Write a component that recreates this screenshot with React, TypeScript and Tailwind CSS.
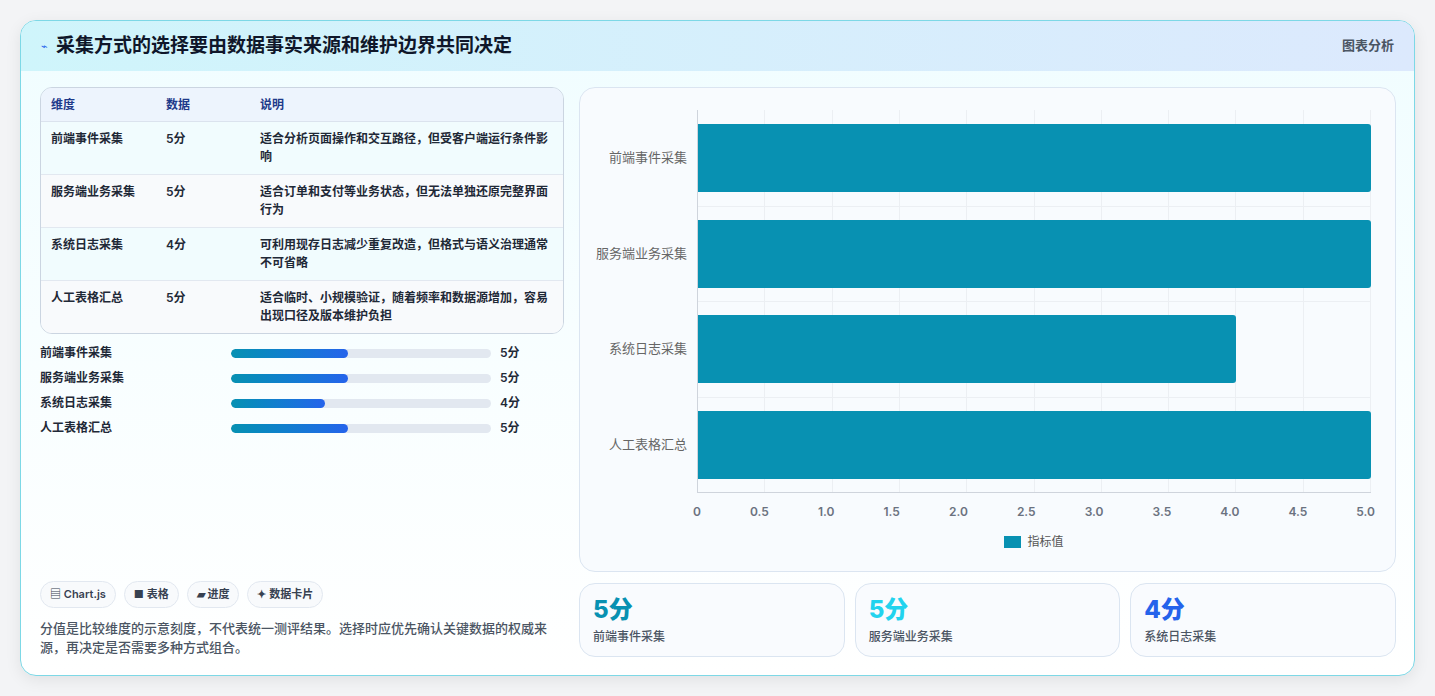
const rows = [
  { name: "前端事件采集", v: 5, desc: "适合分析页面操作和交互路径，但受客户端运行条件影响" },
  { name: "服务端业务采集", v: 5, desc: "适合订单和支付等业务状态，但无法单独还原完整界面行为" },
  { name: "系统日志采集", v: 4, desc: "可利用现存日志减少重复改造，但格式与语义治理通常不可省略" },
  { name: "人工表格汇总", v: 5, desc: "适合临时、小规模验证，随着频率和数据源增加，容易出现口径及版本维护负担" },
];

const ticks = ["0", "0.5", "1.0", "1.5", "2.0", "2.5", "3.0", "3.5", "4.0", "4.5", "5.0"];

function Chart() {
  return (
    <div className="flex-1 rounded-2xl border border-[#dbe5f1] bg-[#f8fbfe] pt-[22px] pb-[20px] pr-[24px] flex flex-col">
      <div className="flex">
        <div className="w-[117px] flex flex-col text-[13px] text-[#666]">
          {rows.map((r) => (
            <div key={r.name} className="h-[95.5px] flex items-center justify-end pr-[10px]">{r.name}</div>
          ))}
        </div>
        <div className="flex-1 relative border-l border-b border-[#cfd4dc]">
          <div className="absolute inset-0 grid grid-cols-10">
            {ticks.slice(1).map((t) => (
              <div key={t} className="border-r border-[#eceff3]" />
            ))}
          </div>
          <div className="relative flex flex-col">
            {rows.map((r, i) => (
              <div key={r.name} className={"h-[95.5px] flex items-center" + (i > 0 ? " border-t border-[#eceff3]" : "")}>
                <div className="h-[68px] bg-[#0891b2] rounded-r-[3px]" style={{ width: `${(r.v / 5) * 100}%` }} />
              </div>
            ))}
          </div>
        </div>
      </div>
      <div className="flex pl-[117px] mt-[10px]">
        <div className="flex-1 flex justify-between text-[12px] font-semibold text-[#6b7280] -mx-[4px]">
          {ticks.map((t) => (
            <span key={t}>{t}</span>
          ))}
        </div>
      </div>
      <div className="flex justify-center items-center gap-[6px] mt-[12px] pl-[117px] text-[12px] text-[#555]">
        <span className="w-[17px] h-[12px] bg-[#0891b2]" />
        指标值
      </div>
    </div>
  );
}

export default function App() {
  return (
    <div className="w-[1435px] h-[696px] bg-[#f3f4f6] pt-[20px] px-[20px]" style={{ fontFamily: "Inter, 'Noto Sans CJK SC', sans-serif" }}>
      <div className="h-[656px] rounded-2xl border border-[#7dd8e6] bg-gradient-to-b from-[#f0fdff] to-white overflow-hidden flex flex-col shadow-[0_4px_16px_rgba(0,0,0,0.08)]">
        <div className="h-[56px] bg-gradient-to-r from-[#cff5fb] to-[#dce9fd] flex items-center justify-between px-[20px]">
          <div className="flex items-center gap-[8px]">
            <span className="text-[11px] text-[#2563eb]">⌁</span>
            <span className="text-[19px] font-bold text-[#0f172a]">采集方式的选择要由数据事实来源和维护边界共同决定</span>
          </div>
          <span className="text-[13px] font-semibold text-[#4b5563]">图表分析</span>
        </div>
        <div className="flex-1 flex gap-[15px] pt-[16px] pb-[18px] pl-[19px] pr-[18px]">
          <div className="w-[524px] flex flex-col">
            <div className="rounded-xl border border-[#cbd5e1] overflow-hidden">
              <div className="flex h-[34px] items-center bg-[#edf4fd] text-[12px] font-semibold text-[#1e3a8a] border-b border-[#dbe3ee]">
                <div className="w-[125px] pl-[10px]">维度</div>
                <div className="w-[94px]">数据</div>
                <div>说明</div>
              </div>
              {rows.map((r, i) => (
                <div key={r.name} className={"flex py-[8px] text-[12px] font-semibold text-[#1f2937] leading-[18px] " + (i % 2 ? "bg-[#f8fafc]" : "bg-[#f1fcfe]") + (i < 3 ? " border-b border-[#e2e8f0]" : "")}>
                  <div className="w-[125px] pl-[10px]">{r.name}</div>
                  <div className="w-[94px]">{r.v}分</div>
                  <div className="flex-1 pr-[12px]">{r.desc}</div>
                </div>
              ))}
            </div>
            <div className="mt-[10px] flex flex-col gap-[7px]">
              {rows.map((r) => (
                <div key={r.name} className="flex items-center h-[18px] text-[12px] font-semibold text-[#1f2937]">
                  <div className="w-[191px]">{r.name}</div>
                  <div className="w-[260px] h-[9px] rounded-full bg-[#e2e8f0] overflow-hidden">
                    <div className="h-full rounded-full bg-gradient-to-r from-[#0891b2] to-[#2563eb]" style={{ width: `${r.v * 9}%` }} />
                  </div>
                  <div className="ml-[9px]">{r.v}分</div>
                </div>
              ))}
            </div>
            <div className="flex-1" />
            <div className="flex gap-[8px] text-[11px] font-semibold text-[#374151]">
              {["▤ Chart.js", "■ 表格", "▰ 进度", "✦ 数据卡片"].map((c) => (
                <span key={c} className="h-[27px] px-[9px] flex items-center rounded-full border border-[#e2e8f0] bg-[#f8fafc]">{c}</span>
              ))}
            </div>
            <p className="mt-[11px] text-[13px] leading-[19px] font-medium text-[#4b5563]">
              分值是比较维度的示意刻度，不代表统一测评结果。选择时应优先确认关键数据的权威来源，再决定是否需要多种方式组合。
            </p>
          </div>
          <div className="flex-1 flex flex-col gap-[11px]">
            <Chart />
            <div className="h-[74px] grid grid-cols-3 gap-[10px]">
              {[
                { v: "5分", n: "前端事件采集", c: "text-[#0891b2]" },
                { v: "5分", n: "服务端业务采集", c: "text-[#22d3ee]" },
                { v: "4分", n: "系统日志采集", c: "text-[#2563eb]" },
              ].map((s) => (
                <div key={s.n} className="rounded-2xl border border-[#dbe5f1] bg-[#f9fbfe] px-[13px] pt-[10px]">
                  <div className={"text-[24px] font-extrabold leading-[32px] " + s.c}>{s.v}</div>
                  <div className="text-[12px] font-medium text-[#4b5563] mt-[2px]">{s.n}</div>
                </div>
              ))}
            </div>
          </div>
        </div>
      </div>
    </div>
  );
}
